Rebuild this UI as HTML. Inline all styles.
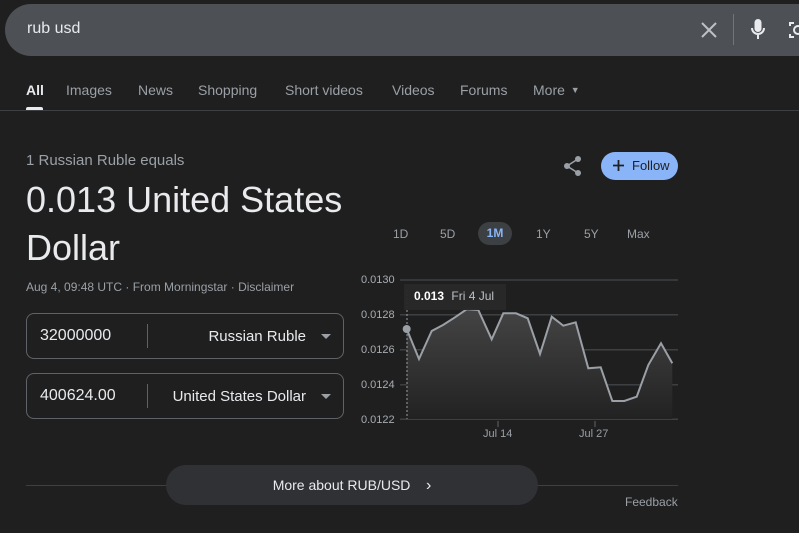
<!DOCTYPE html>
<html><head><meta charset="utf-8"><style>
*{margin:0;padding:0;box-sizing:border-box}
body{width:799px;height:533px;background:#1f1f1f;font-family:"Liberation Sans",Arial,sans-serif;color:#e8eaed;position:relative;overflow:hidden}
.abs{position:absolute}
.search{left:5px;top:4px;width:830px;height:52px;background:#4d5156;border-radius:26px}
.tabs span{position:absolute;top:82px;font-size:14px;color:#9aa0a6}
.sel{border:1px solid #5f6368;border-radius:8px;width:318px;height:46px;left:26px}
.sel .n{position:absolute;left:13px;top:13px;font-size:16px;color:#e8eaed}
.sel .d{position:absolute;left:120px;top:10px;width:1px;height:24px;background:#5f6368}
.sel .c{position:absolute;right:37px;top:14px;font-size:15px;color:#e8eaed}
.sel .a{position:absolute;right:12px;top:20px;border-left:5px solid transparent;border-right:5px solid transparent;border-top:5px solid #9aa0a6}
.rng span{position:absolute;top:227px;font-size:12px;color:#9aa0a6}
.yl{position:absolute;left:361px;font-size:11px;color:#a8adb3}
</style></head><body>
<div class="abs search"></div>
<div class="abs" style="left:27px;top:20px;font-size:16px;color:#e8eaed">rub usd</div>
<svg class="abs" style="left:700px;top:21px" width="18" height="18" viewBox="0 0 18 18"><path d="M2 2L16 16M16 2L2 16" stroke="#bdc1c6" stroke-width="2"/></svg>
<div class="abs" style="left:733px;top:14px;width:1px;height:31px;background:#70757a"></div>
<svg class="abs" style="left:750px;top:18px" width="16" height="24" viewBox="0 0 16 24"><rect x="4.5" y="1" width="7" height="13" rx="3.5" fill="#e8eaed"/><path d="M2 10a6 6 0 0 0 12 0M8 16v5" stroke="#e8eaed" stroke-width="2" fill="none"/></svg>
<svg class="abs" style="left:788px;top:20px" width="14" height="20"><path d="M2 6V3h4M2 14v3h4" stroke="#e8eaed" stroke-width="2" fill="none"/><circle cx="10" cy="10" r="4" stroke="#e8eaed" stroke-width="2" fill="none"/></svg>
<div class="tabs">
<span style="left:26px;color:#e8eaed;font-weight:bold">All</span>
<span style="left:66px">Images</span><span style="left:138px">News</span><span style="left:198px">Shopping</span>
<span style="left:285px">Short videos</span><span style="left:392px">Videos</span><span style="left:460px">Forums</span><span style="left:533px">More <span style="position:static;font-size:9px;vertical-align:2px;margin-left:2px">▼</span></span>
</div>
<div class="abs" style="left:26px;top:107px;width:17px;height:3px;background:#e8eaed;border-radius:2px 2px 0 0"></div>
<div class="abs" style="left:0;top:110px;width:799px;height:1px;background:#3c4043"></div>
<div class="abs" style="left:26px;top:152px;font-size:15px;color:#9aa0a6">1 Russian Ruble equals</div>
<div class="abs" style="left:26px;top:176px;font-size:36px;line-height:48px;color:#e8eaed;width:340px">0.013 United States Dollar</div>
<div class="abs" style="left:26px;top:280px;font-size:12px;color:#9aa0a6">Aug 4, 09:48 UTC · From Morningstar · Disclaimer</div>
<div class="abs sel" style="top:313px"><span class="n">32000000</span><span class="d"></span><span class="c">Russian Ruble</span><span class="a"></span></div>
<div class="abs sel" style="top:373px"><span class="n">400624.00</span><span class="d"></span><span class="c">United States Dollar</span><span class="a"></span></div>
<svg class="abs" style="left:562px;top:155px" width="22" height="22" viewBox="0 0 22 22"><circle cx="16" cy="4" r="3" fill="#9aa0a6"/><circle cx="5" cy="11" r="3" fill="#9aa0a6"/><circle cx="16" cy="18" r="3" fill="#9aa0a6"/><path d="M16 4L5 11L16 18" stroke="#9aa0a6" stroke-width="1.6" fill="none"/></svg>
<div class="abs" style="left:601px;top:152px;width:77px;height:28px;background:#8ab4f8;border-radius:14px;color:#202124;font-size:13px;line-height:28px;padding-left:31px">Follow</div>
<svg class="abs" style="left:612px;top:159px" width="13" height="13"><path d="M6.5 1v11M1 6.5h11" stroke="#202124" stroke-width="1.8"/></svg>
<div class="rng">
<span style="left:393px">1D</span><span style="left:440px">5D</span>
<span style="left:478px;top:222px;width:34px;height:23px;background:#3c4043;border-radius:12px;color:#8ab4f8;font-weight:bold;text-align:center;line-height:23px">1M</span>
<span style="left:536px">1Y</span><span style="left:584px">5Y</span><span style="left:627px">Max</span>
</div>
<span class="yl" style="top:274px">0.0130</span><span class="yl" style="top:309px">0.0128</span><span class="yl" style="top:344px">0.0126</span><span class="yl" style="top:379px">0.0124</span><span class="yl" style="top:414px">0.0122</span>
<svg class="abs" style="left:0;top:0" width="799" height="533">
<defs><linearGradient id="g" x1="0" y1="0" x2="0" y2="1"><stop offset="0" stop-color="#444"/><stop offset="1" stop-color="#222"/></linearGradient></defs>
<g stroke="#3c4043" stroke-width="1.5"><path d="M400 280H678M400 314.7H678M400 349.7H678M400 384.7H678M400 419.3H678"/></g>
<path d="M406.7 329L419 359L431.7 331L443 325L455 317.3L466.7 309.3L478.3 310L491.7 339.3L503.3 313.3L516 313.3L527.7 318.3L540 354L551.7 316.7L563.3 325.7L575.7 322.3L588.3 368.3L600.7 367.3L612.3 401L624.3 401L636.7 396.7L648.3 365L661 343.3L672.3 363.3V419H406.7Z" fill="url(#g)"/>
<path d="M406.7 329L419 359L431.7 331L443 325L455 317.3L466.7 309.3L478.3 310L491.7 339.3L503.3 313.3L516 313.3L527.7 318.3L540 354L551.7 316.7L563.3 325.7L575.7 322.3L588.3 368.3L600.7 367.3L612.3 401L624.3 401L636.7 396.7L648.3 365L661 343.3L672.3 363.3" fill="none" stroke="#9aa0a6" stroke-width="2"/>
<path d="M407 290V419" stroke="#9aa0a6" stroke-dasharray="2 2"/>
<circle cx="406.7" cy="329" r="4" fill="#9aa0a6"/>
<path d="M498 421v6M595 421v6" stroke="#5f6368"/>
<rect x="404" y="284" width="102" height="26" fill="#282828" opacity=".97"/>
</svg>
<div class="abs" style="left:414px;top:289px;font-size:12px"><b style="color:#fff">0.013</b> <span style="color:#bdc1c6;margin-left:4px">Fri 4 Jul</span></div>
<div class="abs" style="left:483px;top:428px;font-size:11px;color:#9aa0a6">Jul 14</div>
<div class="abs" style="left:579px;top:428px;font-size:11px;color:#9aa0a6">Jul 27</div>
<div class="abs" style="left:26px;top:485px;width:652px;height:1px;background:#3c4043"></div>
<div class="abs" style="left:166px;top:465px;width:372px;height:40px;background:#303134;border-radius:20px;font-size:14px;line-height:40px;text-align:center;color:#e8eaed">More about RUB/USD &nbsp;&nbsp;&nbsp;<span style="font-size:16px">›</span></div>
<div class="abs" style="left:625px;top:495px;font-size:12px;color:#9aa0a6">Feedback</div>
</body></html>
